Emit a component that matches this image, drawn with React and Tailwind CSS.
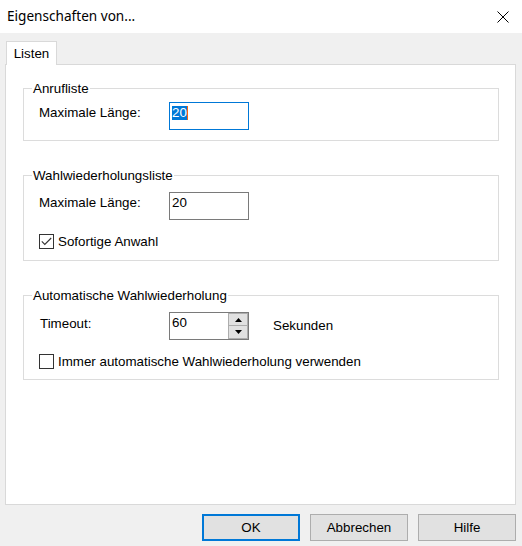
const ui = "font-['Liberation_Sans',Arial,sans-serif]";

function Group({ title, className = '', children }) {
  return (
    <fieldset className={`border border-[#dcdcdc] p-0 m-0 ${className}`}>
      <legend className="ml-[8px] px-px leading-[15px]">{title}</legend>
      {children}
    </fieldset>
  );
}

function TextBox({ value, focused }) {
  return (
    <div
      className={`w-[80px] h-[28px] bg-white border pl-[2px] pt-[2px] leading-[15px] ${
        focused ? 'border-[#0078d7]' : 'border-[#7a7a7a]'
      }`}
    >
      {focused ? (
        <span className="inline-flex items-stretch h-[14px]">
          <span className="bg-[#0078d7] text-white leading-[14px]">{value}</span>
          <span className="w-px bg-[#f7630c]" />
        </span>
      ) : (
        value
      )}
    </div>
  );
}

function SpinBox({ value }) {
  return (
    <div className="w-[80px] h-[28px] bg-white border border-[#7a7a7a] flex">
      <div className="flex-1 pl-[2px] pt-[2px] leading-[15px]">{value}</div>
      <div className="w-[20px] flex flex-col">
        <div className="h-[13px] bg-[#e1e1e1] border border-[#adadad] flex items-center justify-center">
          <svg width="7" height="4" viewBox="0 0 7 4">
            <path d="M3.5 0 L7 4 L0 4 Z" fill="#000" />
          </svg>
        </div>
        <div className="h-[13px] bg-[#e1e1e1] border border-t-0 border-[#adadad] flex items-center justify-center">
          <svg width="7" height="4" viewBox="0 0 7 4">
            <path d="M0 0 L7 0 L3.5 4 Z" fill="#000" />
          </svg>
        </div>
      </div>
    </div>
  );
}

function CheckBox({ checked, label }) {
  return (
    <div className="flex items-center h-[15px] pl-[15px]">
      <div className="w-[15px] h-[15px] border border-[#333333] bg-white flex items-center justify-center">
        {checked && (
          <svg width="11" height="9" viewBox="0 0 11 9">
            <path d="M0.8 4.4 L3.8 7.4 L10.2 1" fill="none" stroke="#333" strokeWidth="1.1" />
          </svg>
        )}
      </div>
      <span className="ml-[4px] leading-[15px]">{label}</span>
    </div>
  );
}

function Button({ children, primary }) {
  return (
    <button
      className={`w-[98px] h-[27px] bg-[#e1e1e1] leading-[15px] ${
        primary ? 'border-2 border-[#0078d7]' : 'border border-[#adadad]'
      }`}
    >
      {children}
    </button>
  );
}

export default function App() {
  return (
    <div className={`w-[522px] h-[546px] bg-[#f0f0f0] flex flex-col text-[13.35px] text-black ${ui}`}>
      {/* title bar */}
      <div className="h-[33px] bg-white flex items-center justify-between pl-[7px] pr-[13px] shrink-0">
        <span className="font-['Noto_Sans',sans-serif] text-[13.6px]">Eigenschaften von...</span>
        <svg width="12" height="12" viewBox="0 0 12 12">
          <path d="M0.5 0.5 L11.5 11.5 M11.5 0.5 L0.5 11.5" stroke="#000" strokeWidth="1" />
        </svg>
      </div>

      <div className="pl-[5px] pr-[6px] pt-[8px]">
        <div className="flex pl-px">
          <div className="relative z-10 -mb-px h-[24px] w-[51px] bg-white border border-b-0 border-[#d9d9d9] flex items-center justify-center pt-px">
            Listen
          </div>
        </div>

        <div className="h-[441px] bg-white border border-[#d9d9d9] pl-[17px] pr-[16px] pt-[16px]">
          <Group title="Anrufliste">
            <div className="flex items-start pl-[15px] pt-[6px] pb-[10px]">
              <span className="w-[130px] pt-[3px] leading-[15px]">Maximale Länge:</span>
              <TextBox value="20" focused />
            </div>
          </Group>

          <Group title="Wahlwiederholungsliste" className="mt-[27px]">
            <div className="flex items-start pl-[15px] pt-[9px]">
              <span className="w-[130px] pt-[3px] leading-[15px]">Maximale Länge:</span>
              <TextBox value="20" />
            </div>
            <div className="mt-[14px] pb-[11px]">
              <CheckBox checked label="Sofortige Anwahl" />
            </div>
          </Group>

          <Group title="Automatische Wahlwiederholung" className="mt-[27px]">
            <div className="flex items-start pl-[16px] pt-[9px]">
              <span className="w-[129px] pt-[4px] leading-[15px]">Timeout:</span>
              <SpinBox value="60" />
              <span className="ml-[24px] pt-[6px] leading-[15px]">Sekunden</span>
            </div>
            <div className="mt-[14px] pb-[10px]">
              <CheckBox label="Immer automatische Wahlwiederholung verwenden" />
            </div>
          </Group>
        </div>
      </div>

      <div className="flex justify-end gap-[10px] pr-[6px] pt-[9px]">
        <Button primary>OK</Button>
        <Button>Abbrechen</Button>
        <Button>Hilfe</Button>
      </div>
    </div>
  );
}
